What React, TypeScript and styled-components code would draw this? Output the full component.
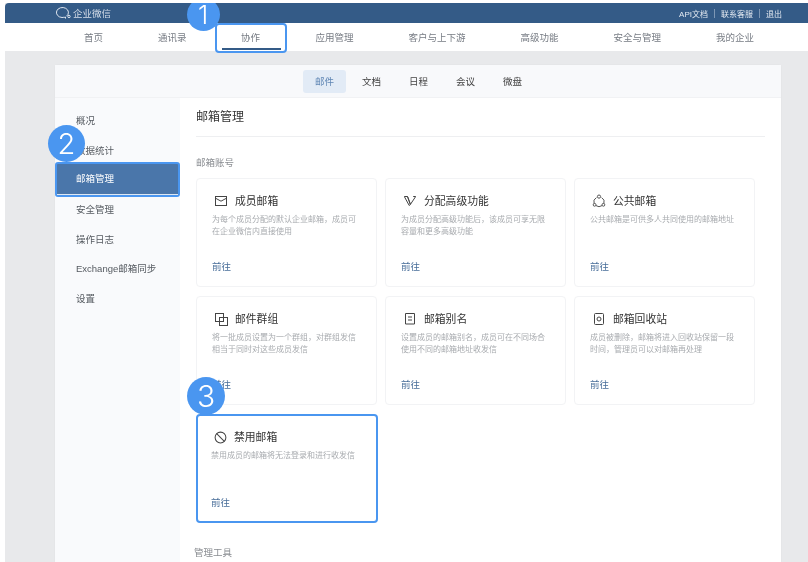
import styled, { createGlobalStyle } from "styled-components";
import type { ReactNode } from "react";

const GlobalStyle = createGlobalStyle`
  html, body {
    margin: 0;
    padding: 0;
    background: #fff;
    overflow: hidden;
  }
  body {
    font-family: "Liberation Sans", "Noto Sans CJK SC", sans-serif;
  }
`;

const navItems = ["首页", "通讯录", "协作", "应用管理", "客户与上下游", "高级功能", "安全与管理", "我的企业"];
const subTabs = ["邮件", "文档", "日程", "会议", "微盘"];
const sideItems = ["概况", "数据统计", "邮箱管理", "安全管理", "操作日志", "Exchange邮箱同步", "设置"];

const MailIcon = () => (
  <svg width="12" height="10" viewBox="0 0 12 10" fill="none" stroke="#444" strokeWidth="1">
    <rect x="0.5" y="0.5" width="11" height="9" />
    <path d="M0.5 2.2 6 5.2l5.5-3" />
  </svg>
);

const VipIcon = () => (
  <svg width="12" height="10" viewBox="0 0 12 10" fill="none" stroke="#444" strokeWidth="1">
    <path d="M0.3 0.5h3.2L6.4 8.4 5.2 9.5 0.3 0.5ZM3.5 0.5 6.4 8.4 11.7 0.5" />
    <path d="M9.2 0.5h2.5" />
  </svg>
);

const PublicIcon = () => (
  <svg width="14" height="14" viewBox="0 0 14 14" fill="none" stroke="#555" strokeWidth="1">
    <path d="M4.4 3.6a5 5 0 0 0-2.3 6M9.6 3.6a5 5 0 0 1 2.3 6M4 11.6a5 5 0 0 0 6 0" />
    <circle cx="7" cy="2.6" r="1.6" />
    <circle cx="2.6" cy="10.8" r="1.4" />
    <circle cx="11.4" cy="10.8" r="1.4" />
  </svg>
);

const GroupIcon = () => (
  <svg width="13" height="13" viewBox="0 0 13 13" fill="none" stroke="#444" strokeWidth="1">
    <rect x="0.5" y="0.5" width="8" height="8" />
    <rect x="4.5" y="4.5" width="8" height="8" />
  </svg>
);

const AliasIcon = () => (
  <svg width="12" height="14" viewBox="0 0 12 14" fill="none" stroke="#444" strokeWidth="1">
    <path d="M1.5 1.5h9v10.5h-9z" />
    <path d="M4 5h4M4 8h4" />
  </svg>
);

const TrashIcon = () => (
  <svg width="12" height="14" viewBox="0 0 12 14" fill="none" stroke="#444" strokeWidth="1">
    <rect x="1.5" y="1.5" width="9" height="11" rx="1" />
    <circle cx="6" cy="7" r="2" />
  </svg>
);

const BanIcon = () => (
  <svg width="13" height="13" viewBox="0 0 14 14" fill="none" stroke="#444" strokeWidth="1.1">
    <circle cx="7" cy="7" r="5.8" />
    <path d="M2.9 2.9l8.2 8.2" />
  </svg>
);

const accountCards = [
  { icon: <MailIcon />, title: "成员邮箱", desc: "为每个成员分配的默认企业邮箱，成员可在企业微信内直接使用" },
  { icon: <VipIcon />, title: "分配高级功能", desc: "为成员分配高级功能后，该成员可享无限容量和更多高级功能" },
  { icon: <PublicIcon />, title: "公共邮箱", desc: "公共邮箱是可供多人共同使用的邮箱地址" },
  { icon: <GroupIcon />, title: "邮件群组", desc: "将一批成员设置为一个群组，对群组发信相当于同时对这些成员发信" },
  { icon: <AliasIcon />, title: "邮箱别名", desc: "设置成员的邮箱别名，成员可在不同场合使用不同的邮箱地址收发信" },
  { icon: <TrashIcon />, title: "邮箱回收站", desc: "成员被删除，邮箱将进入回收站保留一段时间，管理员可以对邮箱再处理" },
];

export default function App() {
  return (
    <Page>
      <GlobalStyle />
      <TopBar>
        <Logo>
          <svg width="17" height="14" viewBox="0 0 17 14" fill="none" stroke="#dfe6ef" strokeWidth="1">
            <path d="M11.5 10.2A6 5 0 1 0 7 11.5c.8 0 1.5-.1 2.2-.4l1.3 1.2V10.8" />
            <circle cx="14" cy="10.5" r="1.2" />
          </svg>
          企业微信
        </Logo>
        <TopLinks>
          <span>API文档</span>
          <Pipe />
          <span>联系客服</span>
          <Pipe />
          <span>退出</span>
        </TopLinks>
      </TopBar>

      <Nav>
        {navItems.map((item) =>
          item === "协作" ? (
            <NavActive key={item}>
              <Badge $size={33} $left={-30} $top={-27}>1</Badge>
              {item}
            </NavActive>
          ) : (
            <NavItem key={item}>{item}</NavItem>
          )
        )}
      </Nav>

      <Content>
        <Panel>
          <SubNav>
            {subTabs.map((tab, i) => (
              <SubTab key={tab} $active={i === 0}>{tab}</SubTab>
            ))}
          </SubNav>
          <PanelBody>
            <Sidebar>
              {sideItems.map((item) =>
                item === "邮箱管理" ? (
                  <SideActive key={item}>
                    <Badge $size={37} $left={-9} $top={-39}>2</Badge>
                    {item}
                  </SideActive>
                ) : (
                  <SideItem key={item}>{item}</SideItem>
                )
              )}
            </Sidebar>
            <Main>
              <Title>邮箱管理</Title>
              <SectionLabel>邮箱账号</SectionLabel>
              <CardGrid>
                {accountCards.map((card) => (
                  <ServiceCard key={card.title} icon={card.icon} title={card.title} desc={card.desc} />
                ))}
                <ServiceCard
                  active
                  icon={<BanIcon />}
                  title="禁用邮箱"
                  desc="禁用成员的邮箱将无法登录和进行收发信"
                />
              </CardGrid>
              <ToolsLabel>管理工具</ToolsLabel>
            </Main>
          </PanelBody>
        </Panel>
      </Content>
    </Page>
  );
}

function ServiceCard({
  icon,
  title,
  desc,
  active,
}: {
  icon: ReactNode;
  title: string;
  desc: string;
  active?: boolean;
}) {
  return (
    <Card $active={active}>
      {active && <Badge $size={38} $left={-11} $top={-39}>3</Badge>}
      <CardHead>
        <IconSlot>{icon}</IconSlot>
        {title}
      </CardHead>
      <CardDesc>{desc}</CardDesc>
      <CardLink>前往</CardLink>
    </Card>
  );
}

const Page = styled.div`
  width: 803px;
  height: 559px;
  margin: 3px 0 0 5px;
  overflow: hidden;
  background: #e8e9eb;
  filter: blur(0.3px);
  display: flex;
  flex-direction: column;
`;

const TopBar = styled.header`
  height: 20px;
  flex-shrink: 0;
  padding: 0 26px 0 50px;
  background: #345b87;
  border-radius: 4px 0 0 0;
  display: flex;
  align-items: center;
  justify-content: space-between;
`;

const Logo = styled.div`
  display: flex;
  align-items: center;
  gap: 1px;
  font-size: 9.5px;
  color: #d5dde8;
`;

const TopLinks = styled.div`
  display: flex;
  align-items: center;
  gap: 5px;
  font-size: 8px;
  color: #e3e9f1;
`;

const Pipe = styled.i`
  width: 1px;
  height: 9px;
  margin: 0 1px;
  background: #7d97b5;
`;

const Nav = styled.nav`
  height: 28px;
  flex-shrink: 0;
  padding-left: 79px;
  background: #fff;
  display: flex;
  align-items: center;
  gap: 55px;
  font-size: 9.5px;
  color: #777c84;
`;

const NavItem = styled.a`
  white-space: nowrap;
`;

const NavActive = styled.a`
  position: relative;
  box-sizing: border-box;
  width: 72px;
  height: 30px;
  margin: 1px -26px 0 -27px;
  padding-bottom: 2px;
  border: 2px solid #4a96f0;
  border-radius: 4px;
  display: flex;
  align-items: center;
  justify-content: center;
  color: #777c84;

  &::after {
    content: "";
    position: absolute;
    left: 5px;
    right: 4px;
    bottom: 1px;
    height: 2px;
    background: #345b87;
  }
`;

const Badge = styled.span<{ $size: number; $left: number; $top: number }>`
  position: absolute;
  z-index: 2;
  left: ${(p) => p.$left}px;
  top: ${(p) => p.$top}px;
  width: ${(p) => p.$size}px;
  height: ${(p) => p.$size}px;
  border-radius: 50%;
  background: #4a96f0;
  color: #fff;
  font-family: Inter, "Liberation Sans", sans-serif;
  font-size: ${(p) => Math.round(p.$size * 0.78)}px;
  font-weight: 300;
  line-height: ${(p) => p.$size}px;
  text-align: center;
`;

const Content = styled.div`
  flex: 1;
  padding: 14px 27px 0 50px;
  min-height: 0;
`;

const Panel = styled.section`
  height: 100%;
  border-radius: 3px 3px 0 0;
  box-shadow: 0 0 2px rgba(0, 0, 0, 0.06);
  background: #fff;
  display: flex;
  flex-direction: column;
`;

const SubNav = styled.div`
  height: 33px;
  flex-shrink: 0;
  padding-left: 248px;
  box-sizing: border-box;
  border-bottom: 1px solid #f1f2f4;
  background: #f8f9fb;
  display: flex;
  align-items: center;
  gap: 4px;
`;

const SubTab = styled.a<{ $active?: boolean }>`
  box-sizing: border-box;
  height: 23px;
  width: 43px;
  border-radius: 3px;
  background: ${(p) => (p.$active ? "#e2ebf6" : "transparent")};
  color: ${(p) => (p.$active ? "#5f86b4" : "#444")};
  font-size: 9.5px;
  line-height: 23px;
  text-align: center;
`;

const PanelBody = styled.div`
  flex: 1;
  min-height: 0;
  display: flex;
`;

const Sidebar = styled.aside`
  width: 125px;
  flex-shrink: 0;
  padding-top: 8px;
  background: #f9fafc;
`;

const SideItem = styled.div`
  height: 29.7px;
  padding-left: 21px;
  font-size: 9.5px;
  line-height: 29.7px;
  color: #555a60;
  white-space: nowrap;
`;

const SideActive = styled.div`
  position: relative;
  box-sizing: border-box;
  height: 35px;
  margin: -3px 0 -2.3px;
  padding-left: 19px;
  border: 2px solid #4a96f0;
  border-radius: 3px;
  background: #4a76aa;
  color: #fff;
  font-size: 9.5px;
  line-height: 30px;

  &::after {
    content: "";
    position: absolute;
    left: 0;
    right: 0;
    bottom: 0;
    height: 1px;
    background: #dfe8f3;
  }
`;

const Main = styled.main`
  flex: 1;
  min-width: 0;
  padding: 0 16px;
`;

const Title = styled.h1`
  margin: 0;
  height: 39px;
  box-sizing: border-box;
  border-bottom: 1px solid #eeeff1;
  font-size: 12px;
  font-weight: normal;
  line-height: 38px;
  color: #333;
`;

const SectionLabel = styled.h2`
  margin: 0;
  height: 41px;
  font-size: 9.5px;
  font-weight: normal;
  line-height: 51px;
  color: #8a8d92;
`;

const CardGrid = styled.div`
  display: grid;
  grid-template-columns: repeat(3, 181px);
  grid-auto-rows: 109px;
  gap: 9px 8px;
`;

const Card = styled.article<{ $active?: boolean }>`
  position: relative;
  box-sizing: border-box;
  margin-right: ${(p) => (p.$active ? "-1px" : "0")};
  padding: ${(p) => (p.$active ? "14px 13px 11px" : "15px 15px 12px")};
  border: ${(p) => (p.$active ? "2px solid #4a96f0" : "1px solid #f2f3f5")};
  border-radius: 4px;
  background: #fff;
  display: flex;
  flex-direction: column;
`;

const CardHead = styled.div`
  height: 14px;
  display: flex;
  align-items: center;
  font-size: 10.8px;
  line-height: 14px;
  color: #333;
`;

const IconSlot = styled.span`
  width: 23px;
  display: flex;
  justify-content: center;
  padding-right: 5px;
  box-sizing: border-box;
`;

const CardDesc = styled.p`
  margin: 6px 0 0;
  font-size: 8px;
  line-height: 12px;
  color: #a8abaf;
`;

const CardLink = styled.a`
  margin-top: auto;
  font-size: 9.5px;
  line-height: 14px;
  color: #4a6f9a;
`;

const ToolsLabel = styled.h2`
  margin: 23px 0 0 -2px;
  font-size: 9.5px;
  font-weight: normal;
  line-height: 14px;
  color: #8a8d92;
`;
